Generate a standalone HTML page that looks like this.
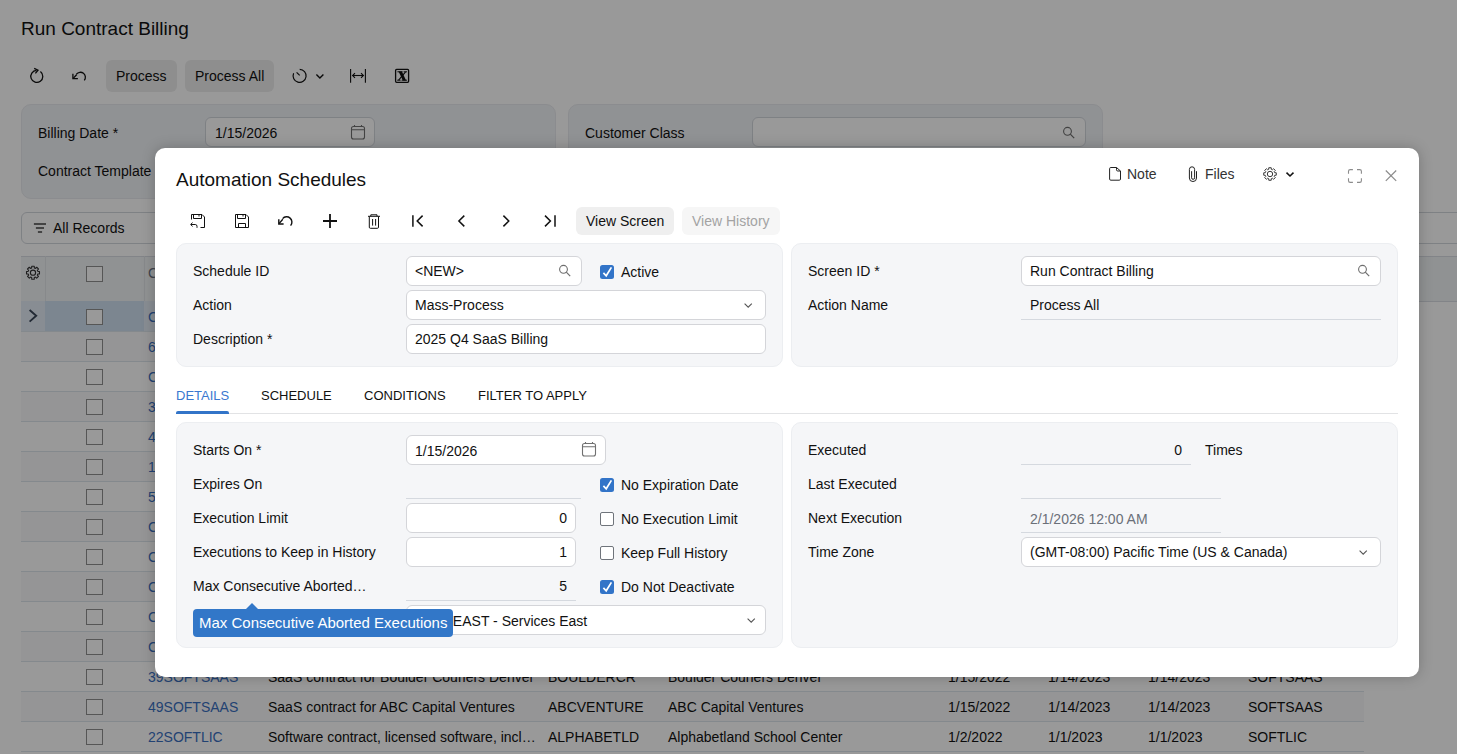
<!DOCTYPE html>
<html><head><meta charset="utf-8"><style>*{box-sizing:border-box;margin:0;padding:0}
html,body{width:1457px;height:754px;overflow:hidden;background:#fff;font-family:"Liberation Sans",sans-serif;font-size:14px;color:#111;position:relative}
.a{position:absolute}
.t{position:absolute;white-space:nowrap}
#ov{position:absolute;left:0;top:0;width:1457px;height:754px;background:rgba(0,0,0,0.4)}
#modal{position:absolute;left:155px;top:148px;width:1264px;height:529px;background:#fff;border-radius:10px;box-shadow:0 0 14px rgba(0,0,0,0.22)}
svg{position:absolute;overflow:visible}
</style></head><body>
<div class="t" style="left:21px;top:18.41px;font-size:19px;line-height:22px;">Run Contract Billing</div>
<div class="a" style="left:106px;top:60px;width:71px;height:32px;background:#ededed;border-radius:6px"></div>
<div class="t" style="left:116px;top:68.15px;font-size:14px;line-height:16px;">Process</div>
<div class="a" style="left:185px;top:60px;width:89px;height:32px;background:#ededed;border-radius:6px"></div>
<div class="t" style="left:195px;top:68.15px;font-size:14px;line-height:16px;">Process All</div>
<div class="a" style="left:21px;top:104px;width:535px;height:95px;background:#f1f3f7;border:1px solid #e8eaee;border-radius:10px"></div>
<div class="a" style="left:568px;top:104px;width:535px;height:95px;background:#f1f3f7;border:1px solid #e8eaee;border-radius:10px"></div>
<div class="t" style="left:38px;top:125.15px;font-size:14px;line-height:16px;">Billing Date *</div>
<div class="a" style="left:205px;top:117px;width:170px;height:30px;background:#fff;border:1px solid #d3d7dd;border-radius:6px"></div>
<div class="t" style="left:215px;top:125.15px;font-size:14px;line-height:16px;">1/15/2026</div>
<div class="t" style="left:38px;top:163.15px;font-size:14px;line-height:16px;">Contract Template</div>
<div class="t" style="left:585px;top:125.15px;font-size:14px;line-height:16px;">Customer Class</div>
<div class="a" style="left:752px;top:117px;width:334px;height:30px;background:#fff;border:1px solid #d3d7dd;border-radius:6px"></div>
<div class="a" style="left:21px;top:212px;width:1450px;height:32px;background:#fff;border:1px solid #d3d7dd;border-radius:6px"></div>
<div class="t" style="left:53px;top:220.15px;font-size:14px;line-height:16px;">All Records</div>
<div class="a" style="left:21px;top:256px;width:1436px;height:46px;background:#f1f3f6;border-top:1px solid #d9dde3;border-bottom:1px solid #d9dde3"></div>
<div class="a" style="left:45px;top:256px;width:1px;height:46px;background:#e1e4e8"></div>
<div class="a" style="left:144px;top:256px;width:1px;height:46px;background:#e1e4e8"></div>
<div class="t" style="left:148px;top:265.15px;font-size:14px;line-height:16px;color:#6b7280;">Contract ID</div>
<div class="a" style="left:86px;top:266px;width:17px;height:16px;background:#fff;border:1px solid #8f8f8f"></div>
<div class="a" style="left:21px;top:301px;width:24px;height:30px;background:#e3ecf6"></div>
<div class="a" style="left:45px;top:301px;width:99px;height:30px;background:#cfdff0"></div>
<div class="a" style="left:144px;top:301px;width:1220px;height:30px;background:#e3ecf6"></div>
<div class="a" style="left:21px;top:331px;width:1343px;height:1px;background:#dde4ec"></div>
<div class="a" style="left:86px;top:309px;width:17px;height:16px;background:#fff;border:1px solid #8f8f8f"></div>
<div class="a" style="left:21px;top:332px;width:1343px;height:29px;background:#f8f9fa"></div>
<div class="a" style="left:21px;top:361px;width:1343px;height:1px;background:#dde4ec"></div>
<div class="a" style="left:86px;top:339px;width:17px;height:16px;background:#fff;border:1px solid #8f8f8f"></div>
<div class="a" style="left:21px;top:391px;width:1343px;height:1px;background:#dde4ec"></div>
<div class="a" style="left:86px;top:369px;width:17px;height:16px;background:#fff;border:1px solid #8f8f8f"></div>
<div class="a" style="left:21px;top:392px;width:1343px;height:29px;background:#f8f9fa"></div>
<div class="a" style="left:21px;top:421px;width:1343px;height:1px;background:#dde4ec"></div>
<div class="a" style="left:86px;top:399px;width:17px;height:16px;background:#fff;border:1px solid #8f8f8f"></div>
<div class="a" style="left:21px;top:451px;width:1343px;height:1px;background:#dde4ec"></div>
<div class="a" style="left:86px;top:429px;width:17px;height:16px;background:#fff;border:1px solid #8f8f8f"></div>
<div class="a" style="left:21px;top:452px;width:1343px;height:29px;background:#f8f9fa"></div>
<div class="a" style="left:21px;top:481px;width:1343px;height:1px;background:#dde4ec"></div>
<div class="a" style="left:86px;top:459px;width:17px;height:16px;background:#fff;border:1px solid #8f8f8f"></div>
<div class="a" style="left:21px;top:511px;width:1343px;height:1px;background:#dde4ec"></div>
<div class="a" style="left:86px;top:489px;width:17px;height:16px;background:#fff;border:1px solid #8f8f8f"></div>
<div class="a" style="left:21px;top:512px;width:1343px;height:29px;background:#f8f9fa"></div>
<div class="a" style="left:21px;top:541px;width:1343px;height:1px;background:#dde4ec"></div>
<div class="a" style="left:86px;top:519px;width:17px;height:16px;background:#fff;border:1px solid #8f8f8f"></div>
<div class="a" style="left:21px;top:571px;width:1343px;height:1px;background:#dde4ec"></div>
<div class="a" style="left:86px;top:549px;width:17px;height:16px;background:#fff;border:1px solid #8f8f8f"></div>
<div class="a" style="left:21px;top:572px;width:1343px;height:29px;background:#f8f9fa"></div>
<div class="a" style="left:21px;top:601px;width:1343px;height:1px;background:#dde4ec"></div>
<div class="a" style="left:86px;top:579px;width:17px;height:16px;background:#fff;border:1px solid #8f8f8f"></div>
<div class="a" style="left:21px;top:631px;width:1343px;height:1px;background:#dde4ec"></div>
<div class="a" style="left:86px;top:609px;width:17px;height:16px;background:#fff;border:1px solid #8f8f8f"></div>
<div class="a" style="left:21px;top:632px;width:1343px;height:29px;background:#f8f9fa"></div>
<div class="a" style="left:21px;top:661px;width:1343px;height:1px;background:#dde4ec"></div>
<div class="a" style="left:86px;top:639px;width:17px;height:16px;background:#fff;border:1px solid #8f8f8f"></div>
<div class="a" style="left:21px;top:691px;width:1343px;height:1px;background:#dde4ec"></div>
<div class="a" style="left:86px;top:669px;width:17px;height:16px;background:#fff;border:1px solid #8f8f8f"></div>
<div class="a" style="left:21px;top:692px;width:1343px;height:29px;background:#f8f9fa"></div>
<div class="a" style="left:21px;top:721px;width:1343px;height:1px;background:#dde4ec"></div>
<div class="a" style="left:86px;top:699px;width:17px;height:16px;background:#fff;border:1px solid #8f8f8f"></div>
<div class="a" style="left:21px;top:751px;width:1343px;height:1px;background:#dde4ec"></div>
<div class="a" style="left:86px;top:729px;width:17px;height:16px;background:#fff;border:1px solid #8f8f8f"></div>
<div class="t" style="left:148px;top:309.15px;font-size:14px;line-height:16px;color:#3a6fbf;">CSAAS</div>
<div class="t" style="left:148px;top:339.15px;font-size:14px;line-height:16px;color:#3a6fbf;">6SOFTSAAS</div>
<div class="t" style="left:148px;top:369.15px;font-size:14px;line-height:16px;color:#3a6fbf;">CONSULT</div>
<div class="t" style="left:148px;top:399.15px;font-size:14px;line-height:16px;color:#3a6fbf;">3SOFTSAAS</div>
<div class="t" style="left:148px;top:429.15px;font-size:14px;line-height:16px;color:#3a6fbf;">4SOFTSAAS</div>
<div class="t" style="left:148px;top:459.15px;font-size:14px;line-height:16px;color:#3a6fbf;">1SOFTSAAS</div>
<div class="t" style="left:148px;top:489.15px;font-size:14px;line-height:16px;color:#3a6fbf;">5SOFTSAAS</div>
<div class="t" style="left:148px;top:519.15px;font-size:14px;line-height:16px;color:#3a6fbf;">CSUPPORT</div>
<div class="t" style="left:148px;top:549.15px;font-size:14px;line-height:16px;color:#3a6fbf;">CSUPPORT</div>
<div class="t" style="left:148px;top:579.15px;font-size:14px;line-height:16px;color:#3a6fbf;">CSUPPORT</div>
<div class="t" style="left:148px;top:609.15px;font-size:14px;line-height:16px;color:#3a6fbf;">CSUPPORT</div>
<div class="t" style="left:148px;top:639.15px;font-size:14px;line-height:16px;color:#3a6fbf;">CSUPPORT</div>
<div class="t" style="left:148px;top:669.15px;font-size:14px;line-height:16px;color:#3a6fbf;">39SOFTSAAS</div>
<div class="t" style="left:268px;top:669.15px;font-size:14px;line-height:16px;">SaaS contract for Boulder Couriers Denver</div>
<div class="t" style="left:548px;top:669.15px;font-size:14px;line-height:16px;">BOULDERCR</div>
<div class="t" style="left:668px;top:669.15px;font-size:14px;line-height:16px;">Boulder Couriers Denver</div>
<div class="t" style="left:948px;top:669.15px;font-size:14px;line-height:16px;">1/15/2022</div>
<div class="t" style="left:1048px;top:669.15px;font-size:14px;line-height:16px;">1/14/2023</div>
<div class="t" style="left:1148px;top:669.15px;font-size:14px;line-height:16px;">1/14/2023</div>
<div class="t" style="left:1248px;top:669.15px;font-size:14px;line-height:16px;">SOFTSAAS</div>
<div class="t" style="left:148px;top:699.15px;font-size:14px;line-height:16px;color:#3a6fbf;">49SOFTSAAS</div>
<div class="t" style="left:268px;top:699.15px;font-size:14px;line-height:16px;">SaaS contract for ABC Capital Ventures</div>
<div class="t" style="left:548px;top:699.15px;font-size:14px;line-height:16px;">ABCVENTURE</div>
<div class="t" style="left:668px;top:699.15px;font-size:14px;line-height:16px;">ABC Capital Ventures</div>
<div class="t" style="left:948px;top:699.15px;font-size:14px;line-height:16px;">1/15/2022</div>
<div class="t" style="left:1048px;top:699.15px;font-size:14px;line-height:16px;">1/14/2023</div>
<div class="t" style="left:1148px;top:699.15px;font-size:14px;line-height:16px;">1/14/2023</div>
<div class="t" style="left:1248px;top:699.15px;font-size:14px;line-height:16px;">SOFTSAAS</div>
<div class="t" style="left:148px;top:729.15px;font-size:14px;line-height:16px;color:#3a6fbf;">22SOFTLIC</div>
<div class="t" style="left:268px;top:729.15px;font-size:14px;line-height:16px;">Software contract, licensed software, incl…</div>
<div class="t" style="left:548px;top:729.15px;font-size:14px;line-height:16px;">ALPHABETLD</div>
<div class="t" style="left:668px;top:729.15px;font-size:14px;line-height:16px;">Alphabetland School Center</div>
<div class="t" style="left:948px;top:729.15px;font-size:14px;line-height:16px;">1/2/2022</div>
<div class="t" style="left:1048px;top:729.15px;font-size:14px;line-height:16px;">1/1/2023</div>
<div class="t" style="left:1148px;top:729.15px;font-size:14px;line-height:16px;">1/1/2023</div>
<div class="t" style="left:1248px;top:729.15px;font-size:14px;line-height:16px;">SOFTLIC</div>
<svg style="left:0;top:0" width="1457" height="754" fill="none"><path d="M40.4 71.6 A6 6 0 1 1 36.5 70.4" stroke="#111" stroke-width="1.3"/><path d="M34.2 68.3 L38 70.2 L35.4 73.3" stroke="#111" stroke-width="1.3"/><path d="M76.4 74.2 A5 5 0 1 1 84.3 80.4" stroke="#111" stroke-width="1.3"/><path d="M76.8 74.5 L73.2 78.4" stroke="#111" stroke-width="1.3"/><path d="M72.9 73.8 V78.7 H77.9" stroke="#111" stroke-width="1.3"/><path d="M299.7 69.3 A6.5 6.5 0 1 1 293.6 73.3" stroke="#111" stroke-width="1.2"/><path d="M296.6 72.3 L299.7 75.4" stroke="#111" stroke-width="1.2"/><path d="M316.4 74.6 L319.9 78 L323.4 74.6" stroke="#111" stroke-width="1.4"/><path d="M350.6 69 V82.8 M365.4 69 V82.8" stroke="#111" stroke-width="1.1"/><path d="M352.6 75.5 H363.4" stroke="#111" stroke-width="1.1"/><path d="M355 73.2 L352.6 75.5 L355 77.8 M361 73.2 L363.4 75.5 L361 77.8" stroke="#111" stroke-width="1.1"/><rect x="395.6" y="69.4" width="13" height="12.9" rx="1" stroke="#111" stroke-width="1.3"/><path d="M398.6 71.6 L401.9 71.6 L406.1 80.4 L402.8 80.4 Z" fill="#111" stroke="none"/><path d="M405.6 71.8 L398.6 80.2" stroke="#111" stroke-width="1.1"/><path d="M397.4 71.8 H402.6 M403.6 71.8 H407 M397.2 80.2 H400.6 M401.6 80.2 H407" stroke="#111" stroke-width="1"/><rect x="351.5" y="126.5" width="13" height="12.5" rx="2" stroke="#707070" stroke-width="1.1"/><path d="M351.5 129.8 H364.5 M354.5 125 V127 M361.5 125 V127" stroke="#707070" stroke-width="1.1"/><circle cx="1067.5" cy="131.3" r="3.9" stroke="#6e6e6e" stroke-width="1.1"/><path d="M1070.3 134.2 L1074.2 138.2" stroke="#6e6e6e" stroke-width="1.2"/><path d="M33.9 224 H46 M35.9 228 H44 M37.9 232 H42.1" stroke="#444" stroke-width="1.5"/><path d="M31.71 267.87 L31.74 266.22 L34.26 266.22 L34.29 267.87 L35.50 268.37 L36.69 267.23 L38.47 269.01 L37.33 270.20 L37.83 271.41 L39.48 271.44 L39.48 273.96 L37.83 273.99 L37.33 275.20 L38.47 276.39 L36.69 278.17 L35.50 277.03 L34.29 277.53 L34.26 279.18 L31.74 279.18 L31.71 277.53 L30.50 277.03 L29.31 278.17 L27.53 276.39 L28.67 275.20 L28.17 273.99 L26.52 273.96 L26.52 271.44 L28.17 271.41 L28.67 270.20 L27.53 269.01 L29.31 267.23 L30.50 268.37 Z" stroke="#333" stroke-width="1.1" stroke-linejoin="round"/><circle cx="33" cy="272.7" r="2.6" stroke="#333" stroke-width="1.1"/><path d="M29.6 310 L36.2 315.8 L29.6 321.6" stroke="#3a4658" stroke-width="1.9"/></svg>
<div id="ov"></div>
<div id="modal"></div>
<div class="t" style="left:176px;top:169.41px;font-size:19px;line-height:22px;">Automation Schedules</div>
<div class="t" style="left:1127px;top:166.15px;font-size:14px;line-height:16px;color:#333;">Note</div>
<div class="t" style="left:1205px;top:166.15px;font-size:14px;line-height:16px;color:#333;">Files</div>
<div class="a" style="left:576px;top:207px;width:98px;height:28px;background:#efefef;border-radius:6px"></div>
<div class="t" style="left:586px;top:213.15px;font-size:14px;line-height:16px;">View Screen</div>
<div class="a" style="left:682px;top:207px;width:98px;height:28px;background:#f6f6f6;border-radius:6px"></div>
<div class="t" style="left:692px;top:213.15px;font-size:14px;line-height:16px;color:#a3a3a3;">View History</div>
<div class="a" style="left:176px;top:243px;width:607px;height:124px;background:#f5f6f8;border:1px solid #eceef1;border-radius:10px"></div>
<div class="a" style="left:791px;top:243px;width:607px;height:124px;background:#f5f6f8;border:1px solid #eceef1;border-radius:10px"></div>
<div class="t" style="left:193px;top:263.15px;font-size:14px;line-height:16px;">Schedule ID</div>
<div class="a" style="left:406px;top:256px;width:176px;height:30px;background:#fff;border:1px solid #d4d5d9;border-radius:6px"></div>
<div class="t" style="left:415px;top:263.15px;font-size:14px;line-height:16px;">&lt;NEW&gt;</div>
<div class="a" style="left:600px;top:265px;width:14px;height:14px;background:#3274c8;border-radius:2.5px"></div>
<div class="t" style="left:621px;top:264.15px;font-size:14px;line-height:16px;">Active</div>
<div class="t" style="left:193px;top:297.15px;font-size:14px;line-height:16px;">Action</div>
<div class="a" style="left:406px;top:290px;width:360px;height:30px;background:#fff;border:1px solid #d4d5d9;border-radius:6px"></div>
<div class="t" style="left:415px;top:297.15px;font-size:14px;line-height:16px;">Mass-Process</div>
<div class="t" style="left:193px;top:331.15px;font-size:14px;line-height:16px;">Description *</div>
<div class="a" style="left:406px;top:324px;width:360px;height:30px;background:#fff;border:1px solid #d4d5d9;border-radius:6px"></div>
<div class="t" style="left:415px;top:331.15px;font-size:14px;line-height:16px;">2025 Q4 SaaS Billing</div>
<div class="t" style="left:808px;top:263.15px;font-size:14px;line-height:16px;">Screen ID *</div>
<div class="a" style="left:1021px;top:256px;width:360px;height:30px;background:#fff;border:1px solid #d4d5d9;border-radius:6px"></div>
<div class="t" style="left:1030px;top:263.15px;font-size:14px;line-height:16px;">Run Contract Billing</div>
<div class="t" style="left:808px;top:297.15px;font-size:14px;line-height:16px;">Action Name</div>
<div class="t" style="left:1030px;top:297.15px;font-size:14px;line-height:16px;">Process All</div>
<div class="a" style="left:1021px;top:319px;width:360px;height:1px;background:#d5d9df"></div>
<div class="t" style="left:176px;top:387.99px;font-size:13px;line-height:15px;color:#3a78d0;">DETAILS</div>
<div class="t" style="left:261px;top:387.99px;font-size:13px;line-height:15px;">SCHEDULE</div>
<div class="t" style="left:364px;top:387.99px;font-size:13px;line-height:15px;">CONDITIONS</div>
<div class="t" style="left:478px;top:387.99px;font-size:13px;line-height:15px;">FILTER TO APPLY</div>
<div class="a" style="left:176px;top:413px;width:1222px;height:1px;background:#e2e3e5"></div>
<div class="a" style="left:176px;top:411px;width:53px;height:3px;background:#3274c8;border-radius:2px 2px 0 0"></div>
<div class="a" style="left:176px;top:422px;width:607px;height:226px;background:#f5f6f8;border:1px solid #eceef1;border-radius:10px"></div>
<div class="a" style="left:791px;top:422px;width:607px;height:226px;background:#f5f6f8;border:1px solid #eceef1;border-radius:10px"></div>
<div class="t" style="left:193px;top:442.15px;font-size:14px;line-height:16px;">Starts On *</div>
<div class="a" style="left:406px;top:435px;width:200px;height:30px;background:#fff;border:1px solid #d4d5d9;border-radius:6px"></div>
<div class="t" style="left:415px;top:443.15px;font-size:14px;line-height:16px;">1/15/2026</div>
<div class="t" style="left:193px;top:476.15px;font-size:14px;line-height:16px;">Expires On</div>
<div class="a" style="left:406px;top:498px;width:175px;height:1px;background:#d5d9df"></div>
<div class="a" style="left:600px;top:478px;width:14px;height:14px;background:#3274c8;border-radius:2.5px"></div>
<div class="t" style="left:621px;top:477.15px;font-size:14px;line-height:16px;">No Expiration Date</div>
<div class="t" style="left:193px;top:510.15px;font-size:14px;line-height:16px;">Execution Limit</div>
<div class="a" style="left:406px;top:503px;width:170px;height:30px;background:#fff;border:1px solid #d4d5d9;border-radius:6px"></div>
<div class="t" style="right:890px;top:510.15px;font-size:14px;line-height:16px;">0</div>
<div class="a" style="left:600px;top:512px;width:14px;height:14px;background:#fff;border:1px solid #6f747b;border-radius:2px"></div>
<div class="t" style="left:621px;top:511.15px;font-size:14px;line-height:16px;">No Execution Limit</div>
<div class="t" style="left:193px;top:544.15px;font-size:14px;line-height:16px;">Executions to Keep in History</div>
<div class="a" style="left:406px;top:537px;width:170px;height:30px;background:#fff;border:1px solid #d4d5d9;border-radius:6px"></div>
<div class="t" style="right:890px;top:544.15px;font-size:14px;line-height:16px;">1</div>
<div class="a" style="left:600px;top:546px;width:14px;height:14px;background:#fff;border:1px solid #6f747b;border-radius:2px"></div>
<div class="t" style="left:621px;top:545.15px;font-size:14px;line-height:16px;">Keep Full History</div>
<div class="t" style="left:193px;top:578.15px;font-size:14px;line-height:16px;">Max Consecutive Aborted…</div>
<div class="t" style="right:890px;top:578.15px;font-size:14px;line-height:16px;">5</div>
<div class="a" style="left:406px;top:600px;width:170px;height:1px;background:#d5d9df"></div>
<div class="a" style="left:600px;top:580px;width:14px;height:14px;background:#3274c8;border-radius:2.5px"></div>
<div class="t" style="left:621px;top:579.15px;font-size:14px;line-height:16px;">Do Not Deactivate</div>
<div class="a" style="left:406px;top:605px;width:360px;height:30px;background:#fff;border:1px solid #d4d5d9;border-radius:6px"></div>
<div class="t" style="left:415px;top:613.15px;font-size:14px;line-height:16px;">SERVEAST - Services East</div>
<div class="t" style="left:808px;top:442.15px;font-size:14px;line-height:16px;">Executed</div>
<div class="t" style="right:275px;top:442.15px;font-size:14px;line-height:16px;">0</div>
<div class="a" style="left:1021px;top:464px;width:170px;height:1px;background:#d5d9df"></div>
<div class="t" style="left:1205px;top:442.15px;font-size:14px;line-height:16px;">Times</div>
<div class="t" style="left:808px;top:476.15px;font-size:14px;line-height:16px;">Last Executed</div>
<div class="a" style="left:1021px;top:498px;width:200px;height:1px;background:#d5d9df"></div>
<div class="t" style="left:808px;top:510.15px;font-size:14px;line-height:16px;">Next Execution</div>
<div class="t" style="left:1030px;top:511.15px;font-size:14px;line-height:16px;color:#6b7079;">2/1/2026 12:00 AM</div>
<div class="a" style="left:1021px;top:532px;width:200px;height:1px;background:#d5d9df"></div>
<div class="t" style="left:808px;top:544.15px;font-size:14px;line-height:16px;">Time Zone</div>
<div class="a" style="left:1021px;top:537px;width:360px;height:30px;background:#fff;border:1px solid #d4d5d9;border-radius:6px"></div>
<div class="t" style="left:1030px;top:544.15px;font-size:14px;line-height:16px;">(GMT-08:00) Pacific Time (US &amp; Canada)</div>
<svg style="left:0;top:0" width="1457" height="754" fill="none"><path d="M1116.5 167.5 H1110.8 Q1109.6 167.5 1109.6 168.7 V179 Q1109.6 180.2 1110.8 180.2 H1119.3 Q1120.5 180.2 1120.5 179 V171 Z M1116.5 167.5 V169.8 Q1116.5 171 1117.7 171 H1120.5" stroke="#222" stroke-width="1" stroke-linejoin="round"/><path d="M1191.6 171.2 V177.8 A1.5 1.5 0 0 0 1194.6 177.8 V169.4 A2.6 2.6 0 0 0 1189.4 169.4 V178 A3.55 3.55 0 0 0 1196.5 178 V171.2" stroke="#222" stroke-width="1"/><path d="M1268.73 169.27 L1268.78 167.72 L1271.22 167.72 L1271.27 169.27 L1272.45 169.76 L1273.58 168.69 L1275.31 170.42 L1274.24 171.55 L1274.73 172.73 L1276.28 172.78 L1276.28 175.22 L1274.73 175.27 L1274.24 176.45 L1275.31 177.58 L1273.58 179.31 L1272.45 178.24 L1271.27 178.73 L1271.22 180.28 L1268.78 180.28 L1268.73 178.73 L1267.55 178.24 L1266.42 179.31 L1264.69 177.58 L1265.76 176.45 L1265.27 175.27 L1263.72 175.22 L1263.72 172.78 L1265.27 172.73 L1265.76 171.55 L1264.69 170.42 L1266.42 168.69 L1267.55 169.76 Z" stroke="#3a3a3a" stroke-width="1" stroke-linejoin="round"/><circle cx="1270" cy="174" r="2.7" stroke="#3a3a3a" stroke-width="1"/><path d="M1286.5 172.6 L1290 176 L1293.5 172.6" stroke="#111" stroke-width="1.5"/><path d="M1348.5 173.7 V171.3 Q1348.5 169.6 1350.2 169.6 H1352.9 M1357 169.6 H1359.7 Q1361.4 169.6 1361.4 171.3 V173.7 M1361.4 178.3 V180.7 Q1361.4 182.4 1359.7 182.4 H1357 M1352.9 182.4 H1350.2 Q1348.5 182.4 1348.5 180.7 V178.3" stroke="#8c8c8c" stroke-width="1.1"/><path d="M1385.8 170.5 L1396.2 180.9 M1396.2 170.5 L1385.8 180.9" stroke="#8c8c8c" stroke-width="1.2"/><path d="M191.5 219.5 V214.5 H202 L204.5 217 V227.5 H200.5" stroke="#111" stroke-width="1"/><path d="M193.5 214.5 V218.5 H201.5 V214.5 M199 215 V216.5" stroke="#111" stroke-width="1"/><path d="M191 224.5 H195.3 Q197 224.5 197 226.3 V227.8 M192.6 222.6 L190.6 224.5 L192.6 226.4" stroke="#111" stroke-width="1"/><path d="M235.5 214.5 H246 L248.5 217 V227.5 H235.5 Z" stroke="#111" stroke-width="1"/><path d="M237.5 214.5 V218.5 H245.5 V214.5 M243 215 V216.5 M238.5 227.5 V223.5 H245.5 V227.5" stroke="#111" stroke-width="1"/><path d="M282.6 218.6 A5.2 5.2 0 1 1 290.6 225.6" stroke="#111" stroke-width="1.4"/><path d="M282.8 219.2 L279 223.6" stroke="#111" stroke-width="1.4"/><path d="M278.8 219.3 V224 H283.6" stroke="#111" stroke-width="1.4"/><path d="M330 214 V228 M323 221 H337" stroke="#111" stroke-width="1.8"/><path d="M368 216.3 H380 M370.8 216.3 V214.8 H377 V216.3 M369.3 216.5 V227.2 Q369.3 228.3 370.4 228.3 H377.4 Q378.5 228.3 378.5 227.2 V216.5 M372.6 219 V225.6 M375.6 219 V225.6" stroke="#111" stroke-width="1"/><path d="M412.9 215.2 V226.8" stroke="#111" stroke-width="1.5"/><path d="M422.6 215.6 L417.2 221 L422.6 226.4" stroke="#111" stroke-width="1.5"/><path d="M464.3 215.6 L458.9 221 L464.3 226.4" stroke="#111" stroke-width="1.5"/><path d="M503.4 215.6 L508.8 221 L503.4 226.4" stroke="#111" stroke-width="1.5"/><path d="M545 215.6 L550.4 221 L545 226.4" stroke="#111" stroke-width="1.5"/><path d="M555 215.2 V226.8" stroke="#111" stroke-width="1.5"/><circle cx="563.5" cy="269.3" r="3.9" stroke="#6e6e6e" stroke-width="1.1"/><path d="M566.3 272.2 L570.2 276.2" stroke="#6e6e6e" stroke-width="1.2"/><path d="M603.4 272.9 L606.2 275.8 L611.4 267.4" stroke="#fff" stroke-width="1.7"/><path d="M744.6 303.6 L748.2 307.2 L751.8 303.6" stroke="#555" stroke-width="1.1"/><circle cx="1362.5" cy="269.3" r="3.9" stroke="#6e6e6e" stroke-width="1.1"/><path d="M1365.3 272.2 L1369.2 276.2" stroke="#6e6e6e" stroke-width="1.2"/><rect x="582.5" y="443.5" width="13" height="12.5" rx="2" stroke="#707070" stroke-width="1.1"/><path d="M582.5 446.8 H595.5 M585.5 442 V444 M592.5 442 V444" stroke="#707070" stroke-width="1.1"/><path d="M603.4 485.9 L606.2 488.8 L611.4 480.4" stroke="#fff" stroke-width="1.7"/><path d="M603.4 587.9 L606.2 590.8 L611.4 582.4" stroke="#fff" stroke-width="1.7"/><path d="M747.6 618.6 L751.2 622.2 L754.8 618.6" stroke="#555" stroke-width="1.1"/><path d="M1359.6 550.6 L1363.2 554.2 L1366.8 550.6" stroke="#555" stroke-width="1.1"/></svg>
<div class="a" style="left:193px;top:609px;width:260px;height:28px;background:#3277c8;border-radius:4px"></div>
<svg style="left:245px;top:602px" width="14" height="8" viewBox="0 0 14 8" fill="none" stroke="currentColor"><path d="M0 8 L7 1 L14 8 Z" fill="#3277c8" stroke="none"/></svg>
<div class="t" style="left:199px;top:614.30px;font-size:15px;line-height:17px;color:#fff;">Max Consecutive Aborted Executions</div>
</body></html>
